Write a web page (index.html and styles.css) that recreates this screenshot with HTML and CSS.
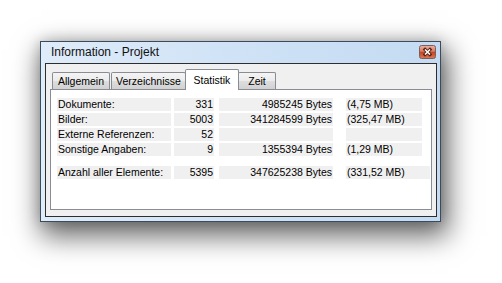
FILE: index.html
```html
<!DOCTYPE html>
<html>
<head>
<meta charset="utf-8">
<title>Information - Projekt</title>
<link rel="stylesheet" href="styles.css">
</head>
<body>
<div class="window">
  <div class="titlebar">
    <span class="title">Information - Projekt</span>
    <span class="close">
      <svg width="17" height="14" viewBox="0 0 17 14">
        <defs>
          <linearGradient id="cg" x1="0" y1="0" x2="0" y2="1">
            <stop offset="0" stop-color="#eab3a4"/>
            <stop offset="0.45" stop-color="#d97a62"/>
            <stop offset="0.5" stop-color="#c4421f"/>
            <stop offset="1" stop-color="#dc7a58"/>
          </linearGradient>
        </defs>
        <rect x="0.5" y="0.5" width="16" height="13" rx="2" fill="url(#cg)" stroke="#7d5f5a"/>
        <path d="M6 4.5 L11 9.5 M11 4.5 L6 9.5" stroke="#5a2418" stroke-width="3.2" stroke-linecap="square"/>
        <path d="M6 4.5 L11 9.5 M11 4.5 L6 9.5" stroke="#ffffff" stroke-width="1.5"/>
      </svg>
    </span>
  </div>
  <div class="client">
    <div class="tabs">
      <div class="tab t1">Allgemein</div>
      <div class="tab t2">Verzeichnisse</div>
      <div class="tab sel">Statistik</div>
      <div class="tab t4">Zeit</div>
    </div>
    <div class="panel">
      <div class="row">
        <div class="c lbl">Dokumente:</div>
        <div class="c cnt">331</div>
        <div class="c byt">4985245 Bytes</div>
        <div class="c mb">(4,75 MB)</div>
      </div>
      <div class="row">
        <div class="c lbl">Bilder:</div>
        <div class="c cnt">5003</div>
        <div class="c byt">341284599 Bytes</div>
        <div class="c mb">(325,47 MB)</div>
      </div>
      <div class="row">
        <div class="c lbl">Externe Referenzen:</div>
        <div class="c cnt">52</div>
        <div class="c byt"></div>
        <div class="c mb"></div>
      </div>
      <div class="row">
        <div class="c lbl">Sonstige Angaben:</div>
        <div class="c cnt">9</div>
        <div class="c byt">1355394 Bytes</div>
        <div class="c mb">(1,29 MB)</div>
      </div>
      <div class="row total">
        <div class="c lbl">Anzahl aller Elemente:</div>
        <div class="c cnt">5395</div>
        <div class="c byt">347625238 Bytes</div>
        <div class="c mb wide">(331,52 MB)</div>
      </div>
    </div>
  </div>
</div>
</body>
</html>
```

FILE: styles.css
```css
html, body {
  margin: 0;
  padding: 0;
  background: #ffffff;
}

body {
  font-family: "Liberation Sans", Arial, sans-serif;
  color: #000;
  min-height: 283px;
  box-sizing: border-box;
  padding-top: 41px;
}

.window {
  margin: 0 0 0 40px;
  width: 401px;
  height: 181px;
  box-sizing: border-box;
  border: 1px solid #3b4b5e;
  background: linear-gradient(to right, #dfecf9 0%, #cfe2f6 50%, #c4dbf3 100%);
  padding: 0 3px 4px 4px;
  display: flex;
  flex-direction: column;
  box-shadow: 4px 11px 26px 3px rgba(0, 0, 0, 0.6), 0 0 12px rgba(0, 0, 0, 0.18);
}

.titlebar {
  height: 21px;
  display: flex;
  align-items: flex-start;
  justify-content: space-between;
}

.title {
  font-size: 12px;
  line-height: 21px;
  padding-left: 6px;
  color: #111;
}

.close {
  display: block;
  width: 17px;
  height: 14px;
  margin-top: 3px;
  margin-right: 1px;
}

.close svg {
  display: block;
}

.client {
  flex: 1;
  border: 1px solid #2e2e2e;
  background: #f0f0f0;
  padding: 5px 4px 6px 4px;
  display: flex;
  flex-direction: column;
}

.tabs {
  height: 20px;
  display: flex;
  align-items: flex-end;
  padding-left: 2px;
  font-size: 10.5px;
}

.tab {
  box-sizing: border-box;
  height: 17px;
  border: 1px solid #898c95;
  border-bottom: none;
  border-radius: 2px 2px 0 0;
  background: linear-gradient(#f4f4f4 0%, #ebebeb 50%, #dedede 50%, #d1d1d1 100%);
  text-align: center;
  line-height: 12px;
  padding-top: 2px;
  white-space: nowrap;
}

.t1 { width: 58px; margin-right: 1px; }
.t2 { width: 75px; }
.t4 { width: 38px; margin-left: -1px; }

.tab.sel {
  position: relative;
  z-index: 1;
  width: 54px;
  height: 21px;
  margin-left: -1px;
  margin-bottom: -1px;
  background: #ffffff;
  padding-top: 4px;
}

.panel {
  flex: 1;
  border: 1px solid #898c95;
  background: #ffffff;
  padding: 8px 0 0 6px;
  font-size: 10.5px;
}

.row {
  display: flex;
  height: 13px;
  margin-bottom: 2px;
}

.row.total {
  margin-top: 10px;
}

.c {
  background: #f0f0f0;
  line-height: 13px;
  white-space: nowrap;
  overflow: hidden;
}

.lbl {
  width: 114px;
  padding-left: 1px;
  box-sizing: border-box;
}

.cnt {
  width: 40px;
  margin-left: 3px;
  text-align: right;
  padding-right: 1px;
  box-sizing: border-box;
}

.byt {
  width: 114px;
  margin-left: 5px;
  text-align: right;
  padding-right: 1px;
  box-sizing: border-box;
}

.mb {
  width: 76px;
  margin-left: 13px;
  padding-left: 1px;
  box-sizing: border-box;
}

.mb.wide {
  width: 84px;
}
```
